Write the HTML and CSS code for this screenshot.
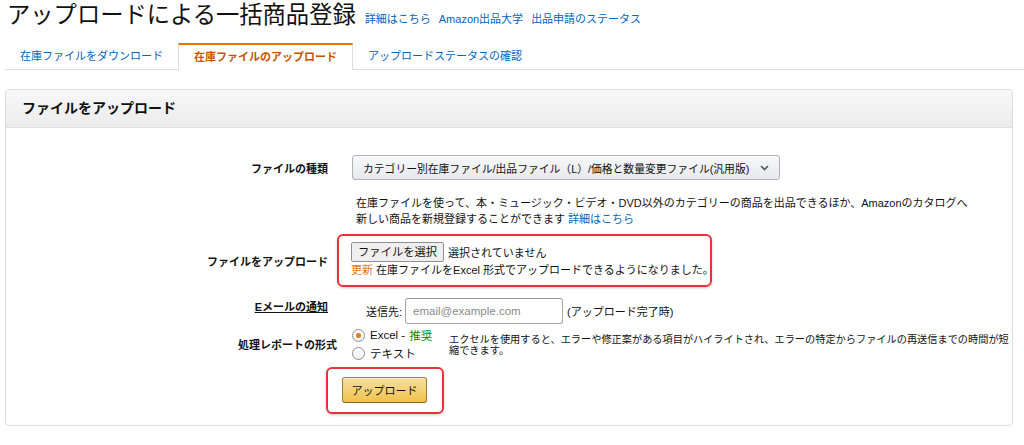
FILE: index.html
```html
<!DOCTYPE html>
<html lang="ja">

<head>
    <meta charset="UTF-8">
    <meta name="viewport" content="width=device-width, initial-scale=1.0">
    <title>アップロードによる一括商品登録</title>
    <link rel="stylesheet" href="styles.css">
</head>

<body>
    <div class="title-bar">
        <h1>アップロードによる一括商品登録</h1>
        <a href="#" class="title-link first">詳細はこちら</a>
        <a href="#" class="title-link">Amazon出品大学</a>
        <a href="#" class="title-link">出品申請のステータス</a>
    </div>

    <div class="tabs">
        <a href="#" class="tab">在庫ファイルをダウンロード</a>
        <span class="tab active">在庫ファイルのアップロード</span>
        <a href="#" class="tab">アップロードステータスの確認</a>
    </div>

    <div class="panel">
        <div class="panel-header">ファイルをアップロード</div>

        <div class="panel-body">
            <!-- ファイルの種類 -->
            <div class="form-row">
                <div class="form-label">ファイルの種類</div>
                <div class="form-field">
                    <div class="select-box">
                        <span>カテゴリー別在庫ファイル/出品ファイル（L）/価格と数量変更ファイル(汎用版)</span>
                        <svg class="chevron" width="9" height="6" viewBox="0 0 9 6">
                            <path d="M1 1 L4.5 4.5 L8 1" fill="none" stroke="#555" stroke-width="1.6"/>
                        </svg>
                    </div>
                </div>
            </div>

            <div class="form-row">
                <div class="form-label"></div>
                <div class="form-field">
                    <p class="help-text">
                        在庫ファイルを使って、本・ミュージック・ビデオ・DVD以外のカテゴリーの商品を出品できるほか、Amazonのカタログへ<br>
                        新しい商品を新規登録することができます <a href="#">詳細はこちら</a>
                    </p>
                </div>
            </div>

            <!-- ファイルをアップロード -->
            <div class="form-row row-file">
                <div class="form-label">ファイルをアップロード</div>
                <div class="form-field">
                    <div class="highlight file-box">
                        <div class="file-line">
                            <span class="file-button">ファイルを選択</span>
                            <span class="file-name">選択されていません</span>
                        </div>
                        <div class="file-note"><span class="new-tag">更新</span> 在庫ファイルをExcel 形式でアップロードできるようになりました。</div>
                    </div>
                </div>
            </div>

            <!-- Eメールの通知 -->
            <div class="form-row row-email">
                <div class="form-label underline">Eメールの通知</div>
                <div class="form-field email-field">
                    <span>送信先:</span>
                    <input type="text" class="email-input" placeholder="email@example.com">
                    <span>(アップロード完了時)</span>
                </div>
            </div>

            <!-- 処理レポートの形式 -->
            <div class="form-row row-report">
                <div class="form-label label-wide">処理レポートの形式</div>
                <div class="form-field report-field">
                    <div class="radio-group">
                        <div class="radio-line"><span class="radio checked"></span>Excel - <span class="recommend">推奨</span></div>
                        <div class="radio-line"><span class="radio"></span>テキスト</div>
                    </div>
                    <p class="report-text">エクセルを使用すると、エラーや修正案がある項目がハイライトされ、エラーの特定からファイルの再送信までの時間が短縮できます。</p>
                </div>
            </div>

            <div class="form-row row-submit">
                <div class="form-label"></div>
                <div class="form-field">
                    <div class="highlight submit-box">
                        <button type="button" class="upload-button">アップロード</button>
                    </div>
                </div>
            </div>
        </div>
    </div>
</body>

</html>
```

FILE: styles.css
```css
:root {
    --text: #111111;
    --link: #0066c0;
    --orange: #c45500;
    --border: #dddddd;
    --red-box: #e8323c;
}

body {
    margin: 0;
    color: var(--text);
    font-family: "Liberation Sans", "Noto Sans CJK JP", sans-serif;
    font-size: 11px;
    background: #ffffff;
}

a {
    color: var(--link);
    text-decoration: none;
}

/* タイトル */
.title-bar {
    display: flex;
    align-items: baseline;
    padding-left: 7px;
    height: 30px;
}

.title-bar h1 {
    margin: 0;
    font-size: 23.3px;
    font-weight: normal;
    line-height: 30px;
    white-space: nowrap;
}

.title-link {
    margin-left: 8px;
    font-size: 11px;
}

.title-link.first {
    margin-left: 9px;
}

/* タブ */
.tabs {
    display: flex;
    margin: 13px 0 0 5px;
    border-bottom: 1px solid var(--border);
    height: 26px;
}

.tab {
    padding: 0 15px;
    line-height: 26px;
    white-space: nowrap;
}

.tab.active {
    color: var(--orange);
    font-weight: bold;
    background: #ffffff;
    border: 1px solid var(--border);
    border-top: 2px solid #e77600;
    border-bottom: none;
    line-height: 25px;
    height: 25px;
}

/* パネル */
.panel {
    margin: 19px 11px 0 5px;
    border: 1px solid var(--border);
    border-radius: 4px;
    overflow: hidden;
}

.panel-header {
    height: 37px;
    line-height: 37px;
    padding-left: 16px;
    font-size: 14px;
    font-weight: bold;
    background: linear-gradient(#f7f7f7, #ececec);
    border-bottom: 1px solid #dedede;
}

.panel-body {
    padding: 27px 0 11px;
}

.form-row {
    display: flex;
    align-items: center;
}

.form-label {
    width: 322px;
    flex: none;
    text-align: right;
    font-weight: bold;
    white-space: nowrap;
}

.form-label.label-wide {
    width: 331px;
    margin-right: -9px;
}

.form-label.underline {
    text-decoration: underline;
}

.form-field {
    margin-left: 9px;
}

/* ファイルの種類 */
.select-box {
    display: flex;
    align-items: center;
    justify-content: space-between;
    box-sizing: border-box;
    width: 428px;
    height: 25px;
    margin-left: 15px;
    padding: 0 10px;
    border: 1px solid #adb1b8;
    border-radius: 3px;
    background: linear-gradient(#f7f8fa, #e7e9ec);
    box-shadow: 0 1px 0 rgba(255, 255, 255, 0.6) inset;
    font-size: 10.8px;
    white-space: nowrap;
}

.chevron {
    margin-left: 6px;
}

.help-text {
    margin: 15px 0 0 19px;
    line-height: 16px;
    font-size: 11px;
}

/* 赤枠 */
.highlight {
    border: 2px solid var(--red-box);
    border-radius: 6px;
    box-shadow: 0 1px 3px rgba(0, 0, 0, 0.2);
}

.row-file {
    margin-top: 7px;
}

.file-box {
    box-sizing: border-box;
    width: 375px;
    padding: 6px 0 7px 12px;
}

.file-line {
    display: flex;
    align-items: center;
    height: 20px;
}

.file-button {
    display: inline-block;
    box-sizing: border-box;
    height: 20px;
    line-height: 18px;
    padding: 0 6px;
    border: 1px solid #8f8f8f;
    border-radius: 2px;
    background: #efefef;
    font-size: 11.3px;
}

.file-name {
    margin-left: 4px;
}

.file-note {
    line-height: 16px;
    white-space: nowrap;
}

.new-tag {
    color: #e47911;
}

/* Eメール */
.row-email {
    margin-top: 11px;
    align-items: flex-start;
}

.row-email .form-label {
    line-height: 18px;
}

.email-field {
    display: flex;
    align-items: center;
    padding-left: 29px;
    white-space: nowrap;
}

.email-input {
    box-sizing: border-box;
    width: 158px;
    height: 26px;
    margin: 0 4px 0 3px;
    padding: 0 7px;
    border: 1px solid #a6a6a6;
    border-top-color: #949494;
    border-radius: 3px;
    font-family: inherit;
    font-size: 11.5px;
    color: var(--text);
}

.email-input::placeholder {
    color: #8a8a8a;
}

/* 処理レポート */
.row-report {
    margin-top: 2px;
}

.report-field {
    display: flex;
    align-items: flex-start;
}

.radio-group {
    width: 97px;
    flex: none;
    margin-left: 15px;
}

.radio-line {
    display: flex;
    align-items: center;
    height: 18px;
    font-size: 11.5px;
    white-space: nowrap;
}

.radio {
    box-sizing: border-box;
    width: 13px;
    height: 13px;
    margin-right: 5px;
    border: 1px solid #8d8d8d;
    border-radius: 50%;
    background: linear-gradient(#ffffff, #f0f0f0);
    display: flex;
    align-items: center;
    justify-content: center;
}

.radio.checked::after {
    content: "";
    width: 5px;
    height: 5px;
    border-radius: 50%;
    background: #e47911;
}

.recommend {
    margin-left: 4px;
    color: #008a00;
}

.report-text {
    margin: 8px 0 0 0;
    width: 560px;
    font-size: 10.2px;
    line-height: 11px;
}

/* アップロードボタン */
.row-submit {
    margin-top: 5px;
}

.submit-box {
    margin-left: -11px;
    padding: 8px 15px 9px 14px;
    display: inline-block;
}

.upload-button {
    display: block;
    width: 85px;
    height: 26px;
    padding: 0;
    border: 1px solid;
    border-color: #a88734 #9c7e31 #846a29;
    border-radius: 3px;
    background: linear-gradient(#f7dfa5, #f0c14b);
    box-shadow: 0 1px 0 rgba(255, 255, 255, 0.4) inset;
    font-family: inherit;
    font-size: 11px;
    color: var(--text);
    cursor: pointer;
}
```
